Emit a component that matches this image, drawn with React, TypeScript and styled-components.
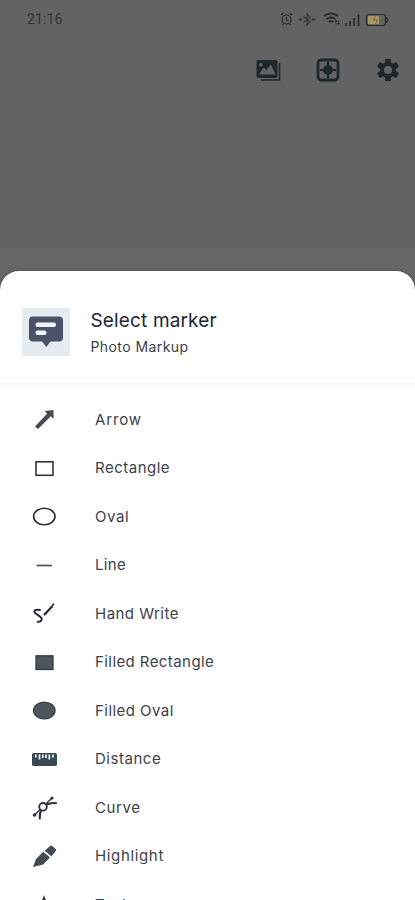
import React from "react";
import styled, { createGlobalStyle } from "styled-components";

const GlobalStyle = createGlobalStyle`
  * { box-sizing: border-box; }
  html, body { margin: 0; padding: 0; height: 100%; overflow: hidden; background: #636363; }
  body { font-family: Inter, "Open Sans", sans-serif; }
  svg { display: block; flex: none; overflow: visible; }
`;

const Screen = styled.div`
  width: 415px;
  height: 900px;
  overflow: hidden;
  display: flex;
  flex-direction: column;
  background: linear-gradient(#636363 0 245px, #666 252px 300px);
`;

const StatusBar = styled.header`
  height: 38px;
  flex: none;
  display: flex;
  align-items: center;
  justify-content: space-between;
  padding: 0 25px 0 27px;
`;

const Clock = styled.span`
  font: 400 14px/16px Roboto, sans-serif;
  letter-spacing: 0.15px;
  color: #353535;
`;

const Toolbar = styled.nav`
  height: 64px;
  flex: none;
  display: flex;
  align-items: center;
  justify-content: flex-end;
  gap: 32px;
  padding-right: 13px;
`;

const ToolButton = styled.button`
  width: 28px;
  height: 28px;
  padding: 0;
  border: 0;
  background: none;
  color: #1d282c;
`;

const Sheet = styled.section`
  margin-top: 169px;
  height: 629px;
  flex: none;
  overflow: hidden;
  background: #fff;
  border-radius: 19px 19px 0 0;
  box-shadow: 0 0 3px #444;
`;

const SheetHeader = styled.div`
  height: 115px;
  display: flex;
  align-items: center;
  padding: 10px 22px 0 21.5px;
  gap: 21px;
  border-bottom: 3px solid #f7f7f7;
`;

const AppBadge = styled.div`
  width: 48px;
  height: 48px;
  border-radius: 2px;
  background: #e6eaf1;
`;

const Titles = styled.div`
  display: flex;
  flex-direction: column;
  gap: 4px;
`;

const Title = styled.h1`
  margin: 0;
  font-size: 19px;
  line-height: 25px;
  font-weight: 400;
  letter-spacing: 0.15px;
  color: #202638;
`;

const Subtitle = styled.p`
  margin: 0;
  font-size: 14px;
  line-height: 20px;
  letter-spacing: 0.42px;
  color: #3c4048;
`;

const MarkerList = styled.ul`
  list-style: none;
  margin: 0;
  padding: 9px 0 0;
`;

const MarkerRow = styled.li`
  height: 48.5px;
  display: flex;
  align-items: center;
  gap: 37px;
  padding-left: 30px;
  color: #424b54;
`;

const MarkerLabel = styled.span<{ $tracking: number }>`
  padding-top: 1px;
  font-size: 15px;
  line-height: 20px;
  letter-spacing: ${(p) => p.$tracking}px;
  color: #3c424a;
  white-space: nowrap;
`;

const StatusIcons = () => (
  <svg width="110" height="16" viewBox="0 0 110 16" fill="none" stroke="#2b2b2b" strokeWidth="1.2">
    <circle cx="6.5" cy="8.5" r="4.5" />
    <path d="M1 4l2.5-2M12 4L9.500 2M6.500 6v3l1.800 1M3.500 12.500l-1 1.500M9.500 12.500l1 1.500" />
    <g stroke="#3a3a3a" strokeWidth="1.300">
      <path d="M23.500 5.500l6.500 5.500-3 3V3l3 3-6.500 5.500M18.500 8.500h3.500M31.500 8.500h4M20.500 7v3M33 7v3" />
    </g>
    <path d="M44 5q7-5 14 0M46.500 8q4.500-3 9 0M49 11q2-1.500 4 0" strokeWidth="2" />
    <path d="M56 9.500v4M58.500 9.500v4M55 11l1-1.500 1 1.500M57.500 12l1 1.500 1-1.500" strokeWidth=".8" />
    <path d="M66 12v3M70 10v5M74 7v8M78.500 3.500v11.500" strokeWidth="1.700" />
    <rect x="86.500" y="3.500" width="19" height="11" rx="2.500" />
    <path d="M106 6.500q3 2.500 0 5" strokeWidth="1.600" />
    <rect x="88" y="5" width="11" height="8" fill="#a79762" stroke="none" />
    <path d="M95.500 5l-2 4h4l-2 4" stroke="#7a6a45" strokeWidth="1" />
  </svg>
);

const GalleryIcon = () => (
  <svg width="28" height="28" viewBox="0 0 28 28">
    <path fill="currentColor" fillRule="evenodd" d="M3 4h19q1.500 0 1.500 1.500v15q0 1.500-1.500 1.500H5q-2.500 0-2.500-2.500v-14Q2.500 4 3 4zm2 14.500h16.500l-4.700-10-4.300 5.500-3-2.500zm1.800-11.500a1.800 1.800 0 1 0 .1 0z" />
    <path d="M25.500 7v17H7" fill="none" stroke="currentColor" strokeWidth="1.500" />
  </svg>
);

const FocusIcon = () => (
  <svg width="28" height="28" viewBox="0 0 28 28" fill="none" stroke="currentColor">
    <rect x="4" y="4" width="20" height="20" rx="3" strokeWidth="2.800" />
    <path d="M8.300 12V8.300H12M16 8.300h3.700V12M19.700 16v3.700H16M12 19.700H8.300V16" stroke="#636363" strokeWidth="1.600" />
    <path d="M14 6v16M6 14h16" strokeWidth="2.200" />
    <circle cx="14" cy="14" r="5" fill="currentColor" stroke="none" />
  </svg>
);

const GearIcon = () => (
  <svg width="28" height="28" viewBox="0 0 28 28">
    <g fill="currentColor">
      {[0, 60, 120].map((angle) => (
        <rect key={angle} x="11" y="2.800" width="6" height="22.400" rx="1.200" transform={`rotate(${angle} 14 14)`} />
      ))}
      <circle cx="14" cy="14" r="8" />
    </g>
    <circle cx="14" cy="14" r="4" fill="#636363" />
  </svg>
);

const BadgeIcon = () => (
  <svg width="48" height="48" viewBox="0 0 48 48">
    <path fill="#4a5269" d="M11 8.500h26q4 0 4 4v17q0 4-4 4h-8.500L24.300 39 20 33.500h-9q-4 0-4-4v-17q0-4 4-4z" />
    <g fill="#f2f5fa">
      <rect x="13.500" y="14.500" width="20.500" height="4.500" rx="2" />
      <rect x="13.500" y="22.500" width="11" height="4.500" rx="2" />
    </g>
  </svg>
);

const markers: { label: string; tracking: number; icon: React.ReactNode }[] = [
  { label: "Arrow", tracking: 0.85, icon: <path d="M23.500 5v9l-2.700-2.700L8 24l-3-2.500 12.200-13L14.500 6z" fill="currentColor" /> },
  { label: "Rectangle", tracking: 0.5, icon: <rect x="6" y="7.800" width="17" height="13.500" fill="none" stroke="#30363b" strokeWidth="1.600" /> },
  { label: "Oval", tracking: 0.6, icon: <ellipse cx="14.300" cy="14.500" rx="10.700" ry="8.300" fill="none" stroke="#222b33" strokeWidth="1.600" /> },
  { label: "Line", tracking: 0.35, icon: <path d="M6.500 14.500h15.500" stroke="#4b5357" strokeWidth="1.700" /> },
  {
    label: "Hand Write", tracking: 0.48, icon: (
      <g fill="none" stroke="#222935" strokeLinecap="round">
        <path d="M10 11Q5 10 4.300 12.200C4 15 10.500 16.500 11.700 19.300Q12 23 7.700 22.800" strokeWidth="2" />
        <path d="M15.500 14.500L22 7.500" strokeWidth="2.200" />
        <path d="M14.500 15.500l1-1M23 5.700l.3-.3" strokeWidth="2" />
      </g>
    ),
  },
  { label: "Filled Rectangle", tracking: 0.42, icon: <rect x="6" y="7.800" width="17" height="13.700" fill="#4d565d" stroke="#303c46" strokeWidth="1.300" /> },
  { label: "Filled Oval", tracking: 0.45, icon: <ellipse cx="14.300" cy="14.500" rx="10.800" ry="8.400" fill="#4d565d" stroke="#35414a" strokeWidth="1.200" /> },
  {
    label: "Distance", tracking: 0.53, icon: (
      <>
        <rect x="2" y="8" width="25" height="13" rx="1.700" fill="#384854" />
        <path d="M5.800 9.500v3M9.500 9.500v5M12.800 9.500v3.500M16 9.500v3.500M19.300 9.500v5M23 9.500v3" stroke="#e9eff2" strokeWidth="1.800" />
      </>
    ),
  },
  {
    label: "Curve", tracking: 0.6, icon: (
      <>
        <g fill="none" stroke="#2d363d" strokeWidth="1.900" strokeLinecap="round">
          <path d="M9.800 25.500Q9.500 18 13 14t13-4" strokeWidth="2.200" />
          <path d="M4.500 22L22 5" strokeWidth="1.500" />
          <circle cx="13" cy="13.800" r="3.800" fill="#fff" />
        </g>
        <g fill="#2d363d"><circle cx="4.500" cy="22" r="1.800" /><circle cx="22" cy="5" r="1.600" /></g>
      </>
    ),
  },
  {
    label: "Highlight", tracking: 0.65, icon: (
      <g fill="#424c52">
        <path d="M20 4q1.200-.9 2.200 0l3.500 3q1 1 0 2.200l-4.500 5-6.500-5.500z" />
        <path d="M13.200 9.800l6.800 5.800-6.800 6.900L3 25l3-8z" />
      </g>
    ),
  },
  { label: "Text", tracking: 0.5, icon: <path d="M8.500 22L14 8.500 19.500 22M10.500 17h7" fill="none" stroke="#303940" strokeWidth="2.500" /> },
];

export default function App() {
  return (
    <>
      <GlobalStyle />
      <Screen>
        <StatusBar>
          <Clock>21:16</Clock>
          <StatusIcons />
        </StatusBar>
        <Toolbar>
          <ToolButton aria-label="Gallery"><GalleryIcon /></ToolButton>
          <ToolButton aria-label="Capture"><FocusIcon /></ToolButton>
          <ToolButton aria-label="Settings"><GearIcon /></ToolButton>
        </Toolbar>
        <Sheet>
          <SheetHeader>
            <AppBadge><BadgeIcon /></AppBadge>
            <Titles>
              <Title>Select marker</Title>
              <Subtitle>Photo Markup</Subtitle>
            </Titles>
          </SheetHeader>
          <MarkerList>
            {markers.map(({ label, tracking, icon }) => (
              <MarkerRow key={label}>
                <svg width="28" height="28" viewBox="0 0 28 28">{icon}</svg>
                <MarkerLabel $tracking={tracking}>{label}</MarkerLabel>
              </MarkerRow>
            ))}
          </MarkerList>
        </Sheet>
      </Screen>
    </>
  );
}
